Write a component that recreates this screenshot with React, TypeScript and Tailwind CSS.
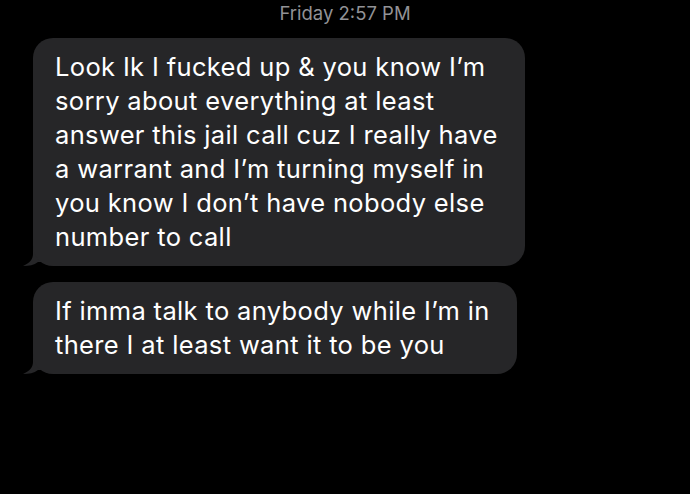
import React from 'react';

const Tail: React.FC = () => (
  <svg
    className="absolute left-[-10px] bottom-0 w-[24px] h-[22px]"
    viewBox="0 0 24 22"
    fill="#262628"
  >
    <path d="M10 0 L10 10 C10 15 7 19 0 22 C6 22 11 21 15 18 L24 18 L24 0 Z" />
  </svg>
);

const Bubble: React.FC<{ lines: string[]; width: string }> = ({ lines, width }) => (
  <div className={`relative ml-[33px] ${width}`}>
    <div className="relative z-10 rounded-[20px] bg-[#262628] pl-[22px] pr-[16px] py-[12px] text-[25.5px] leading-[34px] tracking-[0.35px] text-white whitespace-nowrap">
      {lines.map((l, i) => (
        <div key={i}>{l}</div>
      ))}
    </div>
    <Tail />
  </div>
);

const App: React.FC = () => {
  return (
    <div
      className="w-[690px] h-[494px] bg-black overflow-hidden"
      style={{ fontFamily: 'Inter, "Noto Sans", sans-serif' }}
    >
      <div className="h-[38px] pt-[1px] text-center text-[18.5px] leading-[24px] text-[#929296]">
        Friday 2:57 PM
      </div>
      <div className="flex flex-col gap-[16px]">
        <Bubble
          width="w-[492px]"
          lines={[
            'Look Ik I fucked up & you know I’m',
            'sorry about everything at least',
            'answer this jail call cuz I really have',
            'a warrant and I’m turning myself in',
            'you know I don’t have nobody else',
            'number to call',
          ]}
        />
        <Bubble
          width="w-[484px]"
          lines={['If imma talk to anybody while I’m in', 'there I at least want it to be you']}
        />
      </div>
    </div>
  );
};

export default App;
